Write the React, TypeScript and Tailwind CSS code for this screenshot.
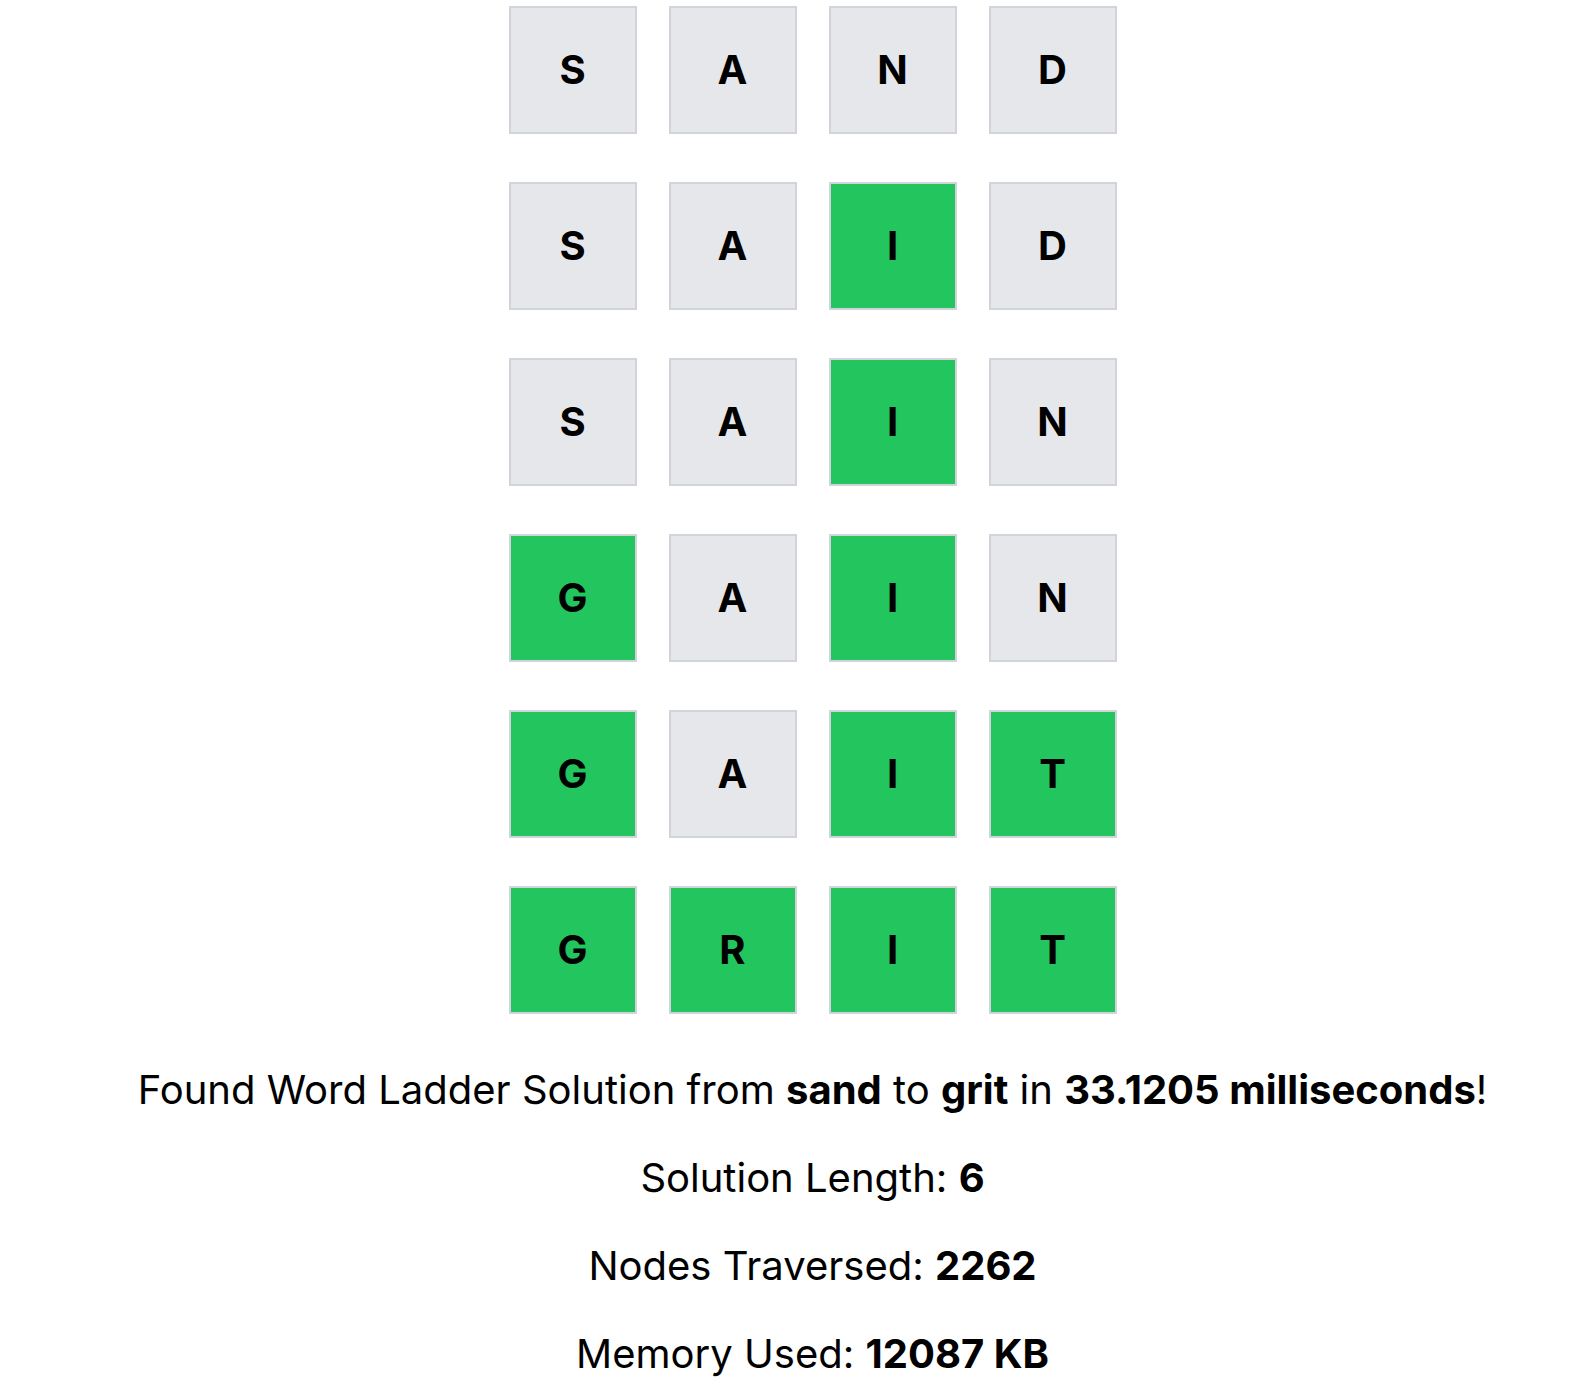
import React from 'react';

const ladder = ['SAND', 'SAID', 'SAIN', 'GAIN', 'GAIT', 'GRIT'];
const target = 'GRIT';

function Tile({ letter, done }: { letter: string; done: boolean }) {
  return (
    <div
      className={`w-32 h-32 border-2 border-[#d1d5db] flex items-center justify-center text-[40px] font-bold text-black ${
        done ? 'bg-[#22c55e]' : 'bg-[#e5e7eb]'
      }`}
    >
      {letter}
    </div>
  );
}

export default function App() {
  return (
    <div className="min-h-screen bg-white pl-10 pt-1.5 pb-10 font-['Inter',sans-serif] text-black">
      <div className="flex flex-col items-center gap-12">
        {ladder.map((word, i) => (
          <div key={i} className="flex gap-8">
            {word.split('').map((ch, j) => (
              <Tile key={j} letter={ch} done={ch === target[j]} />
            ))}
          </div>
        ))}
      </div>

      <div className="mt-[46px] flex flex-col items-center gap-7 text-[40px] leading-[60px]">
        <p>
          Found Word Ladder Solution from <b className="font-bold">sand</b> to <b className="font-bold">grit</b> in{' '}
          <b className="font-bold">33.1205 milliseconds</b>!
        </p>
        <p>
          Solution Length: <b className="font-bold">6</b>
        </p>
        <p>
          Nodes Traversed: <b className="font-bold">2262</b>
        </p>
        <p>
          Memory Used: <b className="font-bold">12087 KB</b>
        </p>
      </div>
    </div>
  );
}
